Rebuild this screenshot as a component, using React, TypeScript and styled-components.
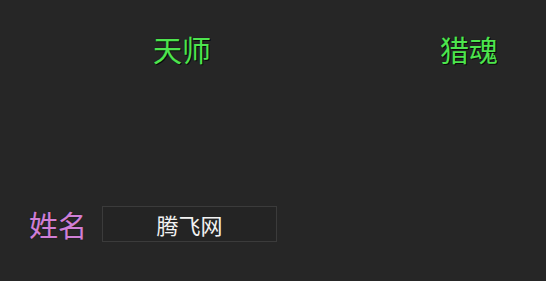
import styled, { createGlobalStyle } from "styled-components";

const GlobalStyle = createGlobalStyle`
  html, body {
    margin: 0;
    padding: 0;
    background: #262626;
  }
  body {
    font-family: "Noto Sans CJK SC", "Noto Sans", sans-serif;
  }
`

const Page = styled.div`
  width: 546px;
  height: 281px;
  display: flex;
  flex-direction: column;
  justify-content: space-between;
  background: #262626;
  overflow: hidden;
`

const TitleRow = styled.div`
  display: flex;
  align-items: center;
  padding: 31px 0 0 153px;
  gap: 229px;
`

const Title = styled.span`
  font-size: 29px;
  line-height: 36px;
  color: #4ee44e;
  text-shadow: 0 0 1px #000, 1px 1px 0 #0a0a0a, 0 0 0.4px #4ee44e;
`

const FormRow = styled.div`
  display: flex;
  align-items: center;
  padding: 0 0 39px 29px;
  gap: 15px;
`

const FieldLabel = styled.label`
  font-size: 29px;
  line-height: 36px;
  color: #cf7fd6;
  text-shadow: 0 0 1px #000, 0 0 0.4px #cf7fd6;
`

const NameBox = styled.div`
  width: 173px;
  height: 34px;
  border: 1px solid #3b3b3b;
  background: #242424;
  display: flex;
  align-items: center;
  justify-content: center;
  font-size: 22px;
  color: #f2f2f2;
`

export default function App() {
  return (
    <>
      <GlobalStyle />
      <Page>
        <TitleRow>
          <Title>天师</Title>
          <Title>猎魂</Title>
        </TitleRow>
        <FormRow>
          <FieldLabel>姓名</FieldLabel>
          <NameBox>腾飞网</NameBox>
        </FormRow>
      </Page>
    </>
  )
}
